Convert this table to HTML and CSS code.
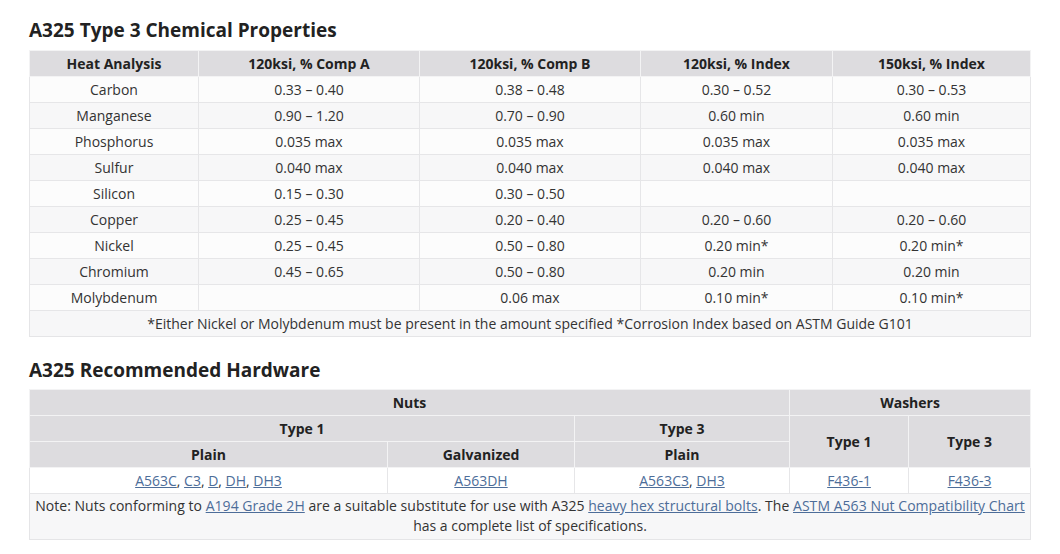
FILE: index.html
```html
<!DOCTYPE html>
<html>
<head>
<meta charset="utf-8">
<link rel="stylesheet" href="styles.css">
</head>
<body>
<div class="page">
  <h2 class="title">A325 Type 3 Chemical Properties</h2>
  <table class="spec chem">
    <colgroup>
      <col style="width:169px"><col style="width:221px"><col style="width:221px"><col style="width:192px"><col style="width:198px">
    </colgroup>
    <thead>
      <tr><th>Heat Analysis</th><th>120ksi, % Comp A</th><th>120ksi, % Comp B</th><th>120ksi, % Index</th><th>150ksi, % Index</th></tr>
    </thead>
    <tbody>
      <tr><td>Carbon</td><td>0.33 – 0.40</td><td>0.38 – 0.48</td><td>0.30 – 0.52</td><td>0.30 – 0.53</td></tr>
      <tr><td>Manganese</td><td>0.90 – 1.20</td><td>0.70 – 0.90</td><td>0.60 min</td><td>0.60 min</td></tr>
      <tr><td>Phosphorus</td><td>0.035 max</td><td>0.035 max</td><td>0.035 max</td><td>0.035 max</td></tr>
      <tr><td>Sulfur</td><td>0.040 max</td><td>0.040 max</td><td>0.040 max</td><td>0.040 max</td></tr>
      <tr><td>Silicon</td><td>0.15 – 0.30</td><td>0.30 – 0.50</td><td></td><td></td></tr>
      <tr><td>Copper</td><td>0.25 – 0.45</td><td>0.20 – 0.40</td><td>0.20 – 0.60</td><td>0.20 – 0.60</td></tr>
      <tr><td>Nickel</td><td>0.25 – 0.45</td><td>0.50 – 0.80</td><td>0.20 min*</td><td>0.20 min*</td></tr>
      <tr><td>Chromium</td><td>0.45 – 0.65</td><td>0.50 – 0.80</td><td>0.20 min</td><td>0.20 min</td></tr>
      <tr><td>Molybdenum</td><td></td><td>0.06 max</td><td>0.10 min*</td><td>0.10 min*</td></tr>
      <tr class="note"><td colspan="5">*Either Nickel or Molybdenum must be present in the amount specified *Corrosion Index based on ASTM Guide G101</td></tr>
    </tbody>
  </table>

  <h2 class="title second">A325 Recommended Hardware</h2>
  <table class="spec hw">
    <colgroup>
      <col style="width:358px"><col style="width:187px"><col style="width:215px"><col style="width:119px"><col style="width:122px">
    </colgroup>
    <thead>
      <tr><th colspan="3">Nuts</th><th colspan="2">Washers</th></tr>
      <tr><th colspan="2">Type 1</th><th>Type 3</th><th rowspan="2">Type 1</th><th rowspan="2">Type 3</th></tr>
      <tr><th>Plain</th><th>Galvanized</th><th>Plain</th></tr>
    </thead>
    <tbody>
      <tr><td><a href="#">A563C</a>, <a href="#">C3</a>, <a href="#">D</a>, <a href="#">DH</a>, <a href="#">DH3</a></td><td><a href="#">A563DH</a></td><td><a href="#">A563C3</a>, <a href="#">DH3</a></td><td><a href="#">F436-1</a></td><td><a href="#">F436-3</a></td></tr>
      <tr class="note tall"><td colspan="5"><span class="line">Note: Nuts conforming to <a href="#">A194 Grade 2H</a> are a suitable substitute for use with A325 <a href="#">heavy hex structural bolts</a>. The <a href="#">ASTM A563 Nut Compatibility Chart</a></span><br>has a complete list of specifications.</td></tr>
    </tbody>
  </table>
</div>
</body>
</html>
```
FILE: styles.css
```css
html, body {
  margin: 0;
  padding: 0;
  background: #ffffff;
}
body {
  font-family: "Open Sans", "Liberation Sans", sans-serif;
  color: #333333;
}
.page {
  padding: 17px 30px 0 29px;
}
.title {
  font-size: 19px;
  font-weight: 700;
  color: #222222;
  margin: 0 0 7px 0;
  line-height: 26px;
}
.title.second {
  margin-top: 20px;
  margin-bottom: 6px;
}
.spec {
  width: 1001px;
  border-collapse: collapse;
  table-layout: fixed;
  font-size: 14px;
  border: 1px solid #e2e2e4;
}
.spec th {
  background: #dddcdf;
  font-weight: 700;
  color: #222222;
  height: 25px;
  padding: 0 4px;
  text-align: center;
  border: 1px solid #f3f3f4;
  line-height: 18px;
}
.spec td {
  height: 25px;
  padding: 0 4px;
  text-align: center;
  border: 1px solid #e6e6e8;
  background: #fcfcfc;
  line-height: 18px;
}
.spec tbody tr:nth-child(even) td {
  background: #f7f7f8;
}
.spec tr.note td {
  background: #e5e5e7;
  border-color: #e5e5e7;
}
.spec tr.tall td {
  height: 40px;
  line-height: 20px;
  padding: 2px 2px 3px;
}
.line {
  white-space: nowrap;
  letter-spacing: 0.04px;
}
.hw tbody tr:first-child td {
  background: #ffffff;
}
.spec a {
  color: #4d6d99;
  text-decoration: underline;
}
```
